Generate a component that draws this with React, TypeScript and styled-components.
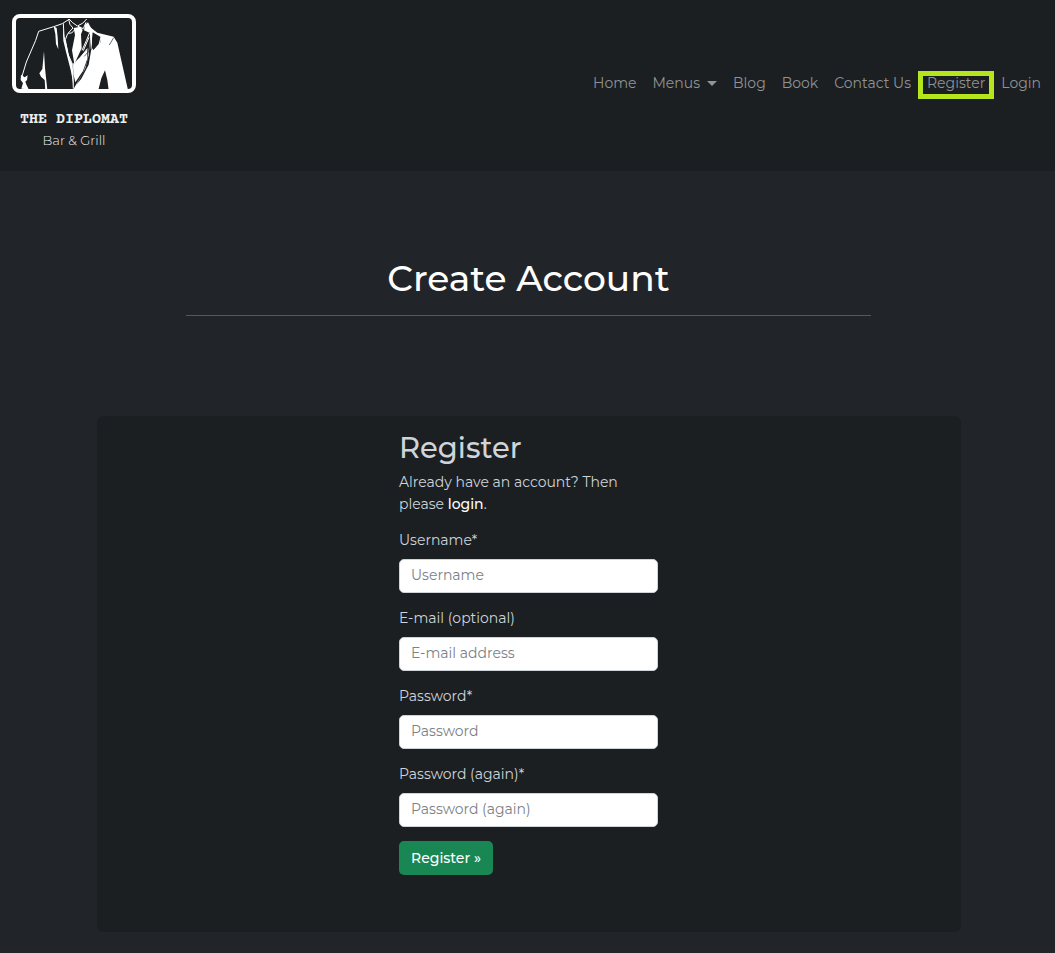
import React from "react";
import styled, { createGlobalStyle } from "styled-components";

const sans = `Montserrat, Inter, "Open Sans", sans-serif`;

const GlobalStyle = createGlobalStyle`
  *, *::before, *::after { box-sizing: border-box; }
  body {
    margin: 0;
    background: #212529;
    color: #ced4da;
    font-family: ${sans};
    font-size: 14px;
    line-height: 22px;
  }
`;

const Navbar = styled.header`
  display: flex;
  align-items: center;
  justify-content: space-between;
  padding: 14px 14px 21px 12px;
  background: #1b1f22;
`;

const Brand = styled.a`
  display: flex;
  flex-direction: column;
  align-items: center;
  width: 124px;
  color: #eceeee;
  text-decoration: none;
`;

const BrandName = styled.span`
  margin-top: 17px;
  font: 700 15px/20px "Courier Prime", "Liberation Mono", monospace;
  white-space: nowrap;
`;

const BrandTag = styled.span`
  font: 300 13px/20px ${sans};
`;

const NavList = styled.ul`
  display: flex;
  gap: 16px;
  margin: 0;
  padding: 2px 0 0;
  list-style: none;
`;

const NavItem = styled.li`
  position: relative;
`;

const NavLink = styled.a`
  display: flex;
  align-items: center;
  gap: 7px;
  color: #919395;
  text-decoration: none;
  white-space: nowrap;
`;

const Caret = styled.span`
  border: 5px solid transparent;
  border-top-color: currentColor;
  border-bottom: 0;
`;

const Highlight = styled.span`
  position: absolute;
  inset: -1px -9px -5px -9px;
  border: 5px solid #b5e61d;
  pointer-events: none;
`;

const Main = styled.main`
  padding: 85px 24px 21px 26px;
`;

const PageHeading = styled.div`
  max-width: 685px;
  margin: 0 auto 100px;
  border-bottom: 1px solid #55585b;
  text-align: center;
`;

const Title = styled.h1`
  margin: 0;
  padding-bottom: 15px;
  color: #fff;
  font-size: 36px;
  font-weight: 500;
  line-height: 44px;
`;

const Card = styled.section`
  max-width: 864px;
  margin: 0 auto;
  padding: 14px 14px 57px;
  border-radius: 6px;
  background: #1b1f22;
`;

const FormColumn = styled.div`
  max-width: 259px;
  margin: 0 auto;
`;

const Subtitle = styled.h2`
  margin: 0 0 6px;
  font-size: 29px;
  font-weight: 500;
  line-height: 35px;
`;

const Intro = styled.p`
  margin: 0 0 14px;
`;

const LoginLink = styled.a`
  color: #fff;
  font-weight: 500;
  text-decoration: none;
`;

const Field = styled.div`
  margin-bottom: 14px;
`;

const Label = styled.label`
  display: block;
  margin-bottom: 8px;
`;

const Input = styled.input`
  display: block;
  width: 100%;
  height: 34px;
  padding: 0 11px 2px;
  border: 1px solid #ced4da;
  border-radius: 5px;
  background: #fff;
  color: #212529;
  font: 400 14px/22px ${sans};
  &::placeholder { color: #7b8187; opacity: 1; }
`;

const Submit = styled.button`
  height: 34px;
  padding: 0 12px;
  border: 0;
  border-radius: 5px;
  background: #198754;
  color: #fff;
  font: 500 14px/22px ${sans};
  cursor: pointer;
`;

const SuitLogo = () => (
  <svg width="124" height="79" viewBox="36 42 372 237" aria-hidden="true">
    <g fill="#fff">
      <path d="M266 78 L292 98 L341 110 L352 128 L384 270 L326 270 L322 240 L315 211 L304 235 L295 270 L219 270 L232 247 L249 219 L262 183 L266 150 L271 110 Z" />
      <path d="M219 194 L262 148 L262 176 L249 213 L226 247 L220 222 Z" />
      <path d="M221 84 L241 80 L248 90 L243 103 L245 145 L223 192 L216 151 L225 105 Z" />
      <path d="M132 154 L135 205 L142 270 L136 270 L134 240 L123 230 L118 220 L127 207 Z" />
      <path d="M161 79 L170 84 L173 112 L175 148 L168 132 L166 102 Z" />
      <path d="M63 224 L74 232 L83 226 L81 240 L76 245 L80 256 L86 268 L64 266 L69 249 L62 240 Z" />
      <path d="M255 74 L264 67 L275 88 L268 98 L252 91 Z" />
      <path d="M189 80 L195 122 L209 176 L218 194 L222 262 L212 210 L198 155 L190 122 Z" />
    </g>
    <g fill="#1b1f22">
      <path d="M278 97 L302 111 L301 127 L281 151 L276 144 L276 117 Z" />
      <path d="M271 103 L274 147 L266 194 L244 236 L229 254 L256 205 L266 166 Z" />
    </g>
    <g fill="none" stroke="#fff" strokeWidth="3">
      <path d="M207 58 L187 71 L161 80 L116 94 L107 121 L79 186 L66 229" />
      <path d="M207 57 Q217 69 232 78 Q250 72 260 57" />
      <path d="M206 58 Q207 75 219 84 L204 100 L215 99 L229 84 M234 79 L250 86 L258 67" />
      <path d="M190 70 L192 110 L201 145 L207 176 L218 221 L220 266" />
      <path d="M203 101 L196 119 L203 160 L218 194 L241 173 L262 146" />
      <path d="M269 98 L259 122 L246 151 M267 112 L250 152 M271 100 L274 148" />
      <path d="M303 111 L297 134 L281 151" />
    </g>
    <path d="M341 113 L328 135 M279 118 L275 149 M266 154 L253 169" fill="none" stroke="#1b1f22" strokeWidth="2" />
    <rect x="42" y="48" width="360" height="225" rx="18" fill="none" stroke="#fff" strokeWidth="12" />
  </svg>
);

const navItems = [
  { label: "Home" },
  { label: "Menus", dropdown: true },
  { label: "Blog" },
  { label: "Book" },
  { label: "Contact Us" },
  { label: "Register", highlighted: true },
  { label: "Login" },
];

const fields = [
  { id: "username", label: "Username*", placeholder: "Username", type: "text" },
  { id: "email", label: "E-mail (optional)", placeholder: "E-mail address", type: "email" },
  { id: "password1", label: "Password*", placeholder: "Password", type: "password" },
  { id: "password2", label: "Password (again)*", placeholder: "Password (again)", type: "password" },
];

export default function App() {
  return (
    <>
      <GlobalStyle />
      <Navbar>
        <Brand href="#">
          <SuitLogo />
          <BrandName>THE DIPLOMAT</BrandName>
          <BrandTag>Bar &amp; Grill</BrandTag>
        </Brand>
        <nav>
          <NavList>
            {navItems.map((item) => (
              <NavItem key={item.label}>
                <NavLink href="#">
                  {item.label}
                  {item.dropdown && <Caret />}
                </NavLink>
                {item.highlighted && <Highlight />}
              </NavItem>
            ))}
          </NavList>
        </nav>
      </Navbar>
      <Main>
        <PageHeading>
          <Title>Create Account</Title>
        </PageHeading>
        <Card>
          <FormColumn>
            <Subtitle>Register</Subtitle>
            <Intro>
              Already have an account? Then please <LoginLink href="#">login</LoginLink>.
            </Intro>
            <form onSubmit={(e) => e.preventDefault()}>
              {fields.map((f) => (
                <Field key={f.id}>
                  <Label htmlFor={f.id}>{f.label}</Label>
                  <Input id={f.id} type={f.type} placeholder={f.placeholder} />
                </Field>
              ))}
              <Submit type="submit">Register »</Submit>
            </form>
          </FormColumn>
        </Card>
      </Main>
    </>
  );
}
